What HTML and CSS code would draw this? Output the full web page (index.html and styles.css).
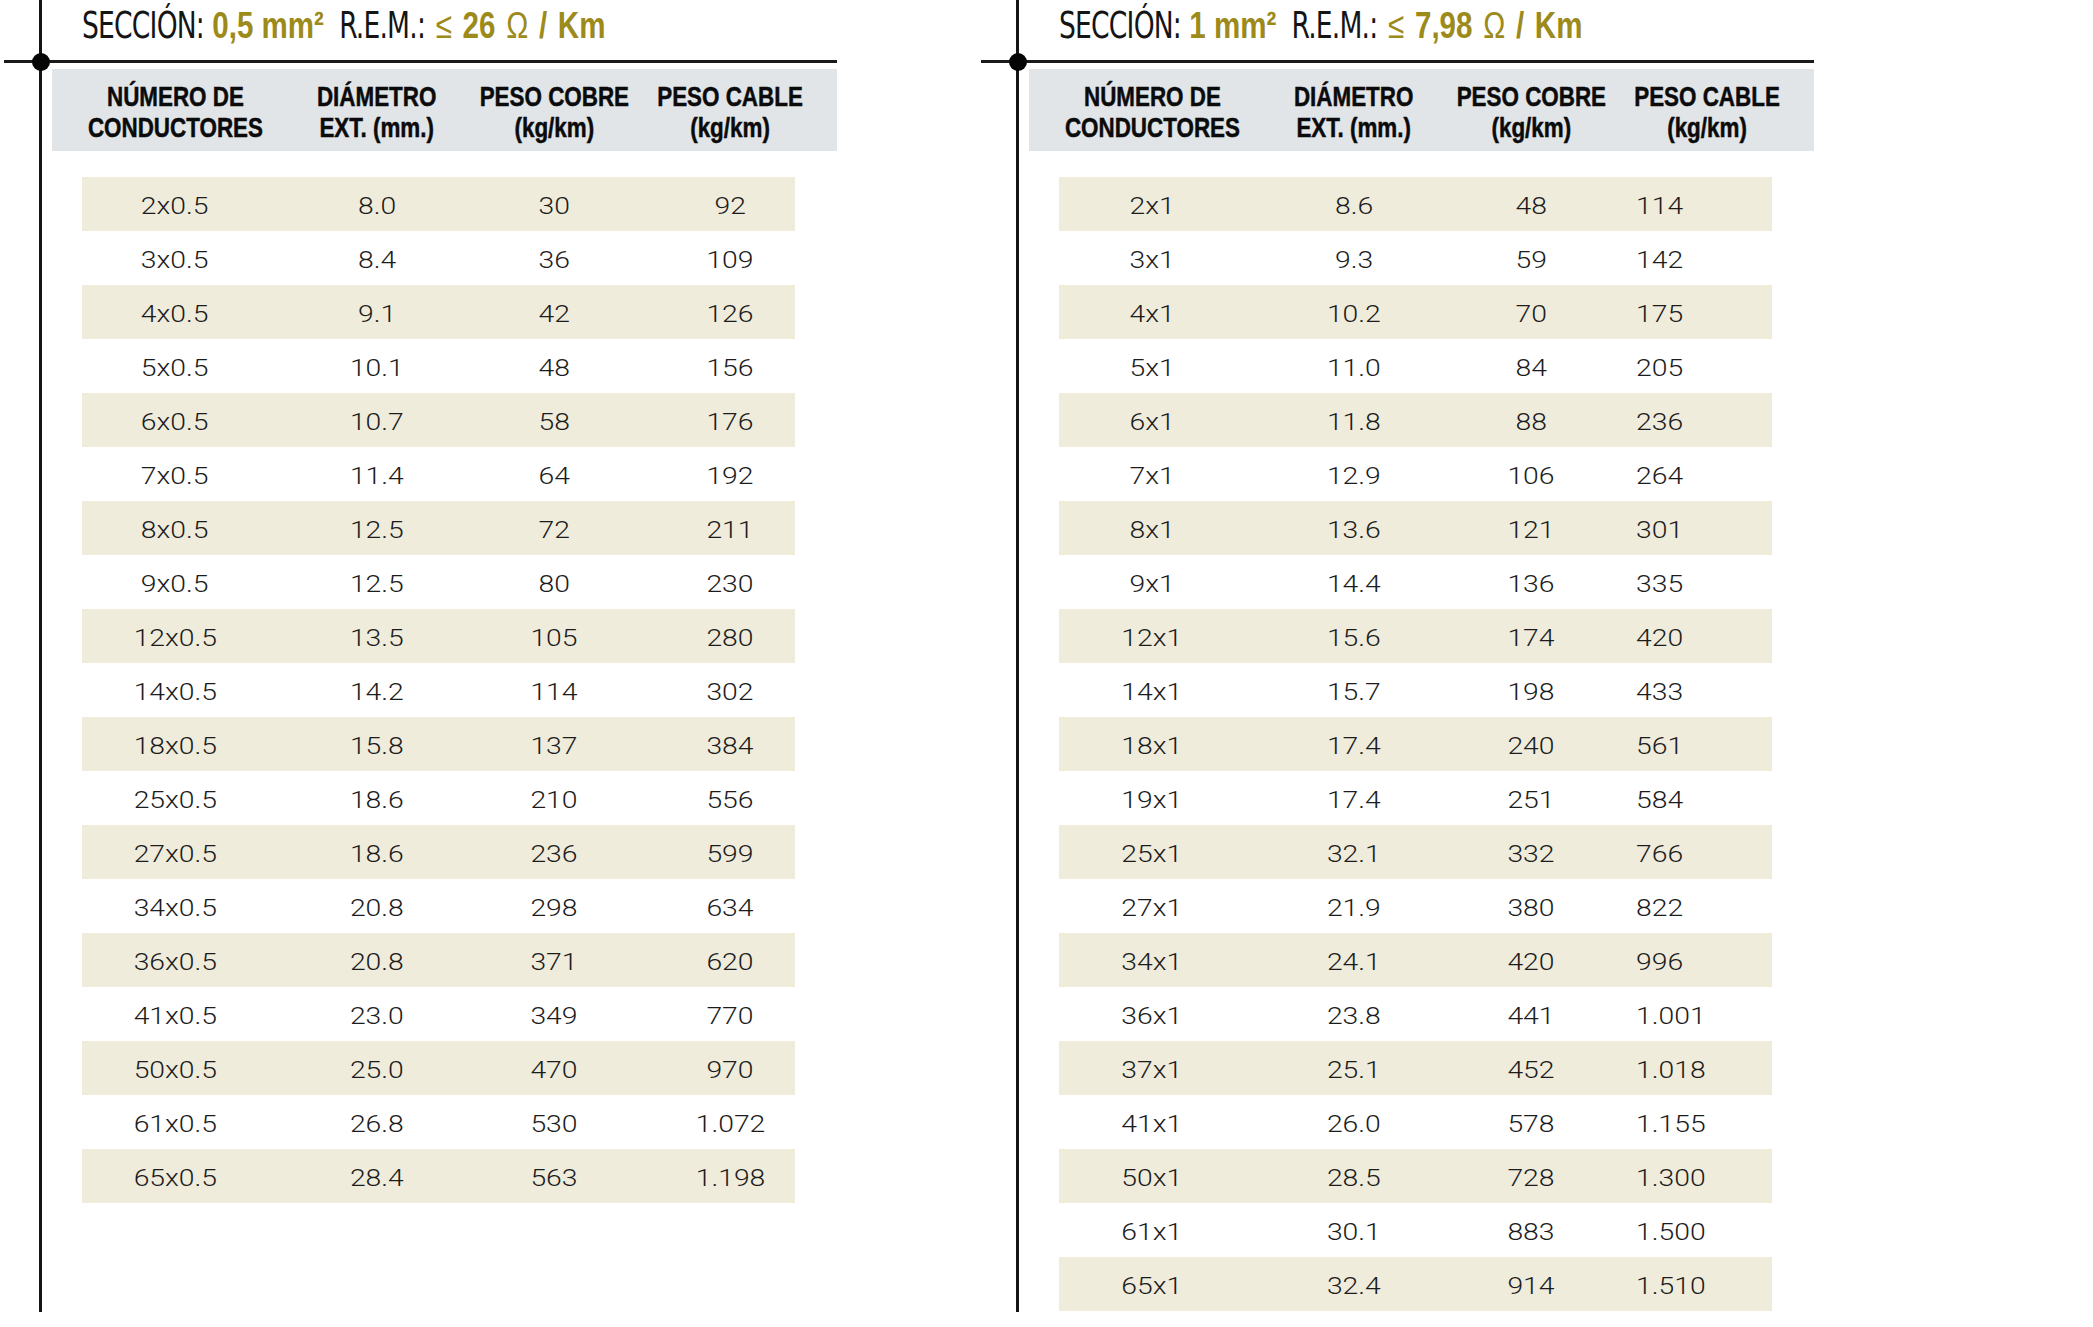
FILE: index.html
```html
<!DOCTYPE html>
<html lang="es">
<head>
<meta charset="utf-8">
<title>Tablas de conductores</title>
<link rel="stylesheet" href="styles.css">
</head>
<body>
<div class="page">
  <section class="panel">
    <div class="frame">
      <h2 class="title"><span class="title-in"><span class="lt">SECCIÓN:</span> <span class="bd ol">0,5 mm²</span><span class="lt">&nbsp; R.E.M.:</span><span class="rem"> <span class="sym ol">≤</span> <span class="bd ol">26</span> <span class="sym ol">Ω</span> <span class="bd ol">/ Km</span></span></span></h2>
      <div class="rule"></div>
      <div class="thead">
        <div class="th"><span>NÚMERO DE<br>CONDUCTORES</span></div>
        <div class="th"><span>DIÁMETRO<br>EXT. (mm.)</span></div>
        <div class="th"><span>PESO COBRE<br>(kg/km)</span></div>
        <div class="th"><span>PESO CABLE<br>(kg/km)</span></div>
      </div>
      <div class="rows">
        <div class="row"><div class="c"><span>2x0.5</span></div><div class="c"><span>8.0</span></div><div class="c"><span>30</span></div><div class="c c4"><span>92</span></div></div>
        <div class="row"><div class="c"><span>3x0.5</span></div><div class="c"><span>8.4</span></div><div class="c"><span>36</span></div><div class="c c4"><span>109</span></div></div>
        <div class="row"><div class="c"><span>4x0.5</span></div><div class="c"><span>9.1</span></div><div class="c"><span>42</span></div><div class="c c4"><span>126</span></div></div>
        <div class="row"><div class="c"><span>5x0.5</span></div><div class="c"><span>10.1</span></div><div class="c"><span>48</span></div><div class="c c4"><span>156</span></div></div>
        <div class="row"><div class="c"><span>6x0.5</span></div><div class="c"><span>10.7</span></div><div class="c"><span>58</span></div><div class="c c4"><span>176</span></div></div>
        <div class="row"><div class="c"><span>7x0.5</span></div><div class="c"><span>11.4</span></div><div class="c"><span>64</span></div><div class="c c4"><span>192</span></div></div>
        <div class="row"><div class="c"><span>8x0.5</span></div><div class="c"><span>12.5</span></div><div class="c"><span>72</span></div><div class="c c4"><span>211</span></div></div>
        <div class="row"><div class="c"><span>9x0.5</span></div><div class="c"><span>12.5</span></div><div class="c"><span>80</span></div><div class="c c4"><span>230</span></div></div>
        <div class="row"><div class="c"><span>12x0.5</span></div><div class="c"><span>13.5</span></div><div class="c"><span>105</span></div><div class="c c4"><span>280</span></div></div>
        <div class="row"><div class="c"><span>14x0.5</span></div><div class="c"><span>14.2</span></div><div class="c"><span>114</span></div><div class="c c4"><span>302</span></div></div>
        <div class="row"><div class="c"><span>18x0.5</span></div><div class="c"><span>15.8</span></div><div class="c"><span>137</span></div><div class="c c4"><span>384</span></div></div>
        <div class="row"><div class="c"><span>25x0.5</span></div><div class="c"><span>18.6</span></div><div class="c"><span>210</span></div><div class="c c4"><span>556</span></div></div>
        <div class="row"><div class="c"><span>27x0.5</span></div><div class="c"><span>18.6</span></div><div class="c"><span>236</span></div><div class="c c4"><span>599</span></div></div>
        <div class="row"><div class="c"><span>34x0.5</span></div><div class="c"><span>20.8</span></div><div class="c"><span>298</span></div><div class="c c4"><span>634</span></div></div>
        <div class="row"><div class="c"><span>36x0.5</span></div><div class="c"><span>20.8</span></div><div class="c"><span>371</span></div><div class="c c4"><span>620</span></div></div>
        <div class="row"><div class="c"><span>41x0.5</span></div><div class="c"><span>23.0</span></div><div class="c"><span>349</span></div><div class="c c4"><span>770</span></div></div>
        <div class="row"><div class="c"><span>50x0.5</span></div><div class="c"><span>25.0</span></div><div class="c"><span>470</span></div><div class="c c4"><span>970</span></div></div>
        <div class="row"><div class="c"><span>61x0.5</span></div><div class="c"><span>26.8</span></div><div class="c"><span>530</span></div><div class="c c4"><span>1.072</span></div></div>
        <div class="row"><div class="c"><span>65x0.5</span></div><div class="c"><span>28.4</span></div><div class="c"><span>563</span></div><div class="c c4"><span>1.198</span></div></div>
      </div>
    </div>
  </section>

  <section class="panel">
    <div class="frame">
      <h2 class="title"><span class="title-in"><span class="lt">SECCIÓN:</span> <span class="bd ol">1 mm²</span><span class="lt">&nbsp; R.E.M.:</span><span class="rem"> <span class="sym ol">≤</span> <span class="bd ol">7,98</span> <span class="sym ol">Ω</span> <span class="bd ol">/ Km</span></span></span></h2>
      <div class="rule"></div>
      <div class="thead">
        <div class="th"><span>NÚMERO DE<br>CONDUCTORES</span></div>
        <div class="th"><span>DIÁMETRO<br>EXT. (mm.)</span></div>
        <div class="th"><span>PESO COBRE<br>(kg/km)</span></div>
        <div class="th"><span>PESO CABLE<br>(kg/km)</span></div>
      </div>
      <div class="rows rows-left4">
        <div class="row"><div class="c"><span>2x1</span></div><div class="c"><span>8.6</span></div><div class="c"><span>48</span></div><div class="c c4"><span>114</span></div></div>
        <div class="row"><div class="c"><span>3x1</span></div><div class="c"><span>9.3</span></div><div class="c"><span>59</span></div><div class="c c4"><span>142</span></div></div>
        <div class="row"><div class="c"><span>4x1</span></div><div class="c"><span>10.2</span></div><div class="c"><span>70</span></div><div class="c c4"><span>175</span></div></div>
        <div class="row"><div class="c"><span>5x1</span></div><div class="c"><span>11.0</span></div><div class="c"><span>84</span></div><div class="c c4"><span>205</span></div></div>
        <div class="row"><div class="c"><span>6x1</span></div><div class="c"><span>11.8</span></div><div class="c"><span>88</span></div><div class="c c4"><span>236</span></div></div>
        <div class="row"><div class="c"><span>7x1</span></div><div class="c"><span>12.9</span></div><div class="c"><span>106</span></div><div class="c c4"><span>264</span></div></div>
        <div class="row"><div class="c"><span>8x1</span></div><div class="c"><span>13.6</span></div><div class="c"><span>121</span></div><div class="c c4"><span>301</span></div></div>
        <div class="row"><div class="c"><span>9x1</span></div><div class="c"><span>14.4</span></div><div class="c"><span>136</span></div><div class="c c4"><span>335</span></div></div>
        <div class="row"><div class="c"><span>12x1</span></div><div class="c"><span>15.6</span></div><div class="c"><span>174</span></div><div class="c c4"><span>420</span></div></div>
        <div class="row"><div class="c"><span>14x1</span></div><div class="c"><span>15.7</span></div><div class="c"><span>198</span></div><div class="c c4"><span>433</span></div></div>
        <div class="row"><div class="c"><span>18x1</span></div><div class="c"><span>17.4</span></div><div class="c"><span>240</span></div><div class="c c4"><span>561</span></div></div>
        <div class="row"><div class="c"><span>19x1</span></div><div class="c"><span>17.4</span></div><div class="c"><span>251</span></div><div class="c c4"><span>584</span></div></div>
        <div class="row"><div class="c"><span>25x1</span></div><div class="c"><span>32.1</span></div><div class="c"><span>332</span></div><div class="c c4"><span>766</span></div></div>
        <div class="row"><div class="c"><span>27x1</span></div><div class="c"><span>21.9</span></div><div class="c"><span>380</span></div><div class="c c4"><span>822</span></div></div>
        <div class="row"><div class="c"><span>34x1</span></div><div class="c"><span>24.1</span></div><div class="c"><span>420</span></div><div class="c c4"><span>996</span></div></div>
        <div class="row"><div class="c"><span>36x1</span></div><div class="c"><span>23.8</span></div><div class="c"><span>441</span></div><div class="c c4"><span>1.001</span></div></div>
        <div class="row"><div class="c"><span>37x1</span></div><div class="c"><span>25.1</span></div><div class="c"><span>452</span></div><div class="c c4"><span>1.018</span></div></div>
        <div class="row"><div class="c"><span>41x1</span></div><div class="c"><span>26.0</span></div><div class="c"><span>578</span></div><div class="c c4"><span>1.155</span></div></div>
        <div class="row"><div class="c"><span>50x1</span></div><div class="c"><span>28.5</span></div><div class="c"><span>728</span></div><div class="c c4"><span>1.300</span></div></div>
        <div class="row"><div class="c"><span>61x1</span></div><div class="c"><span>30.1</span></div><div class="c"><span>883</span></div><div class="c c4"><span>1.500</span></div></div>
        <div class="row"><div class="c"><span>65x1</span></div><div class="c"><span>32.4</span></div><div class="c"><span>914</span></div><div class="c c4"><span>1.510</span></div></div>
      </div>
    </div>
  </section>
</div>
</body>
</html>
```

FILE: styles.css
```css
html, body {
  margin: 0;
  padding: 0;
  background: #ffffff;
}

body {
  font-family: "Liberation Sans", Arial, sans-serif;
  color: #111111;
}

.page {
  display: flex;
  gap: 144px;
  padding-left: 4px;
}

.panel {
  width: 833px;
  flex: none;
}

.frame {
  margin-left: 35px;
  border-left: 3px solid #141414;
  height: 1312px;
}

/* ---------- title ---------- */
.title {
  margin: 0;
  height: 60px;
  box-sizing: border-box;
  padding: 4px 0 0 40px;
  font-size: 36.5px;
  line-height: 44px;
  font-weight: normal;
  white-space: nowrap;
  color: #111111;
}

.title-in {
  display: inline-block;
  transform: scaleX(0.81);
  transform-origin: left center;
}

.lt {
  font-family: "DejaVu Sans Condensed", "Liberation Sans", sans-serif;
  font-weight: normal;
  letter-spacing: -1px;
  color: #151515;
}

.rem {
  word-spacing: 3px;
}

.sym {
  font-family: "Liberation Sans", Arial, sans-serif;
  font-weight: normal;
}

.bd {
  font-family: "Liberation Sans", Arial, sans-serif;
  font-weight: bold;
}

.ol {
  color: #9c8a1b;
}

/* ---------- rule + dot ---------- */
.rule {
  position: relative;
  margin-left: -38px;
  width: 833px;
  height: 3px;
  background: #1a1a1a;
}

.rule::before {
  content: "";
  position: absolute;
  left: 27.5px;
  top: -7.5px;
  width: 18px;
  height: 18px;
  border-radius: 50%;
  background: #050505;
}

/* ---------- table header ---------- */
.thead {
  margin: 6px 0 0 10px;
  width: 785px;
  height: 82px;
  box-sizing: border-box;
  padding-top: 13px;
  background: #e1e5e8;
  display: grid;
  grid-template-columns: 246px 158px 196px 156px;
  align-items: start;
  font-family: "Liberation Sans", Arial, sans-serif;
  font-weight: bold;
  font-size: 28px;
  line-height: 30.5px;
  color: #0b0b0b;
  white-space: nowrap;
}

.th {
  display: flex;
  justify-content: center;
}

.th span {
  display: inline-block;
  text-align: center;
  transform: scaleX(0.8);
  -webkit-text-stroke: 0.5px #0b0b0b;
}

/* ---------- rows ---------- */
.rows {
  margin: 26px 0 0 40px;
  width: 713px;
}

.row {
  display: grid;
  grid-template-columns: 186px 218px 136px 173px;
  height: 54px;
  align-items: center;
  font-family: Roboto, "Liberation Sans", sans-serif;
  font-weight: 300;
  font-size: 24px;
  color: #1c1c1c;
}

.row:nth-child(odd) {
  background: #efecdc;
}

.c {
  box-sizing: border-box;
  height: 54px;
  padding-top: 5px;
  line-height: 49px;
  text-align: center;
  white-space: nowrap;
}

.c span {
  display: inline-block;
  transform: scaleX(1.18);
}

.c4 {
  padding-left: 43px;
}

.rows-left4 .c4 {
  text-align: left;
  padding-left: 37px;
}

.rows-left4 .c4 span {
  transform-origin: left center;
}
```
